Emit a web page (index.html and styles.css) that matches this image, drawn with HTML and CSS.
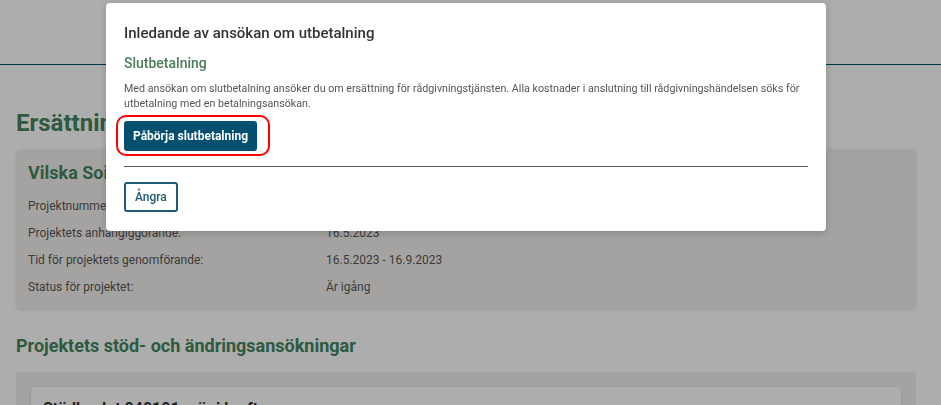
FILE: index.html
```html
<!DOCTYPE html>
<html lang="sv">
<head>
<meta charset="utf-8">
<title>Ersättningar</title>
<link rel="stylesheet" href="styles.css">
</head>
<body>
<header class="topbar"></header>
<main class="page">
  <h1 class="page-title">Ersättningar för rådgivning</h1>
  <section class="card">
    <h2 class="card-title">Vilska Soininen</h2>
    <div class="info-grid">
      <div class="info-label">Projektnummer:</div><div class="info-value">040101</div>
      <div class="info-label">Projektets anhängiggörande:</div><div class="info-value">16.5.2023</div>
      <div class="info-label">Tid för projektets genomförande:</div><div class="info-value">16.5.2023 - 16.9.2023</div>
      <div class="info-label">Status för projektet:</div><div class="info-value">Är igång</div>
    </div>
  </section>
  <h2 class="section-title">Projektets stöd- och ändringsansökningar</h2>
  <section class="card list-card">
    <div class="inner-card">
      <h3 class="inner-title">Stödbeslut 040101 – är i kraft</h3>
    </div>
  </section>
</main>
<div class="overlay"></div>
<div class="modal" role="dialog">
  <h2 class="modal-title">Inledande av ansökan om utbetalning</h2>
  <h3 class="modal-subtitle">Slutbetalning</h3>
  <p class="modal-text">Med ansökan om slutbetalning ansöker du om ersättning för rådgivningstjänsten. Alla kostnader i anslutning till rådgivningshändelsen söks för utbetalning med en betalningsansökan.</p>
  <div class="primary-wrap">
    <button class="btn-primary">Påbörja slutbetalning</button>
    <span class="highlight"></span>
  </div>
  <hr class="modal-divider">
  <button class="btn-secondary">Ångra</button>
</div>
</body>
</html>
```

FILE: styles.css
```css
* { box-sizing: border-box; }
html, body { margin: 0; padding: 0; }
body {
  font-family: Roboto, "Liberation Sans", sans-serif;
  background: #ffffff;
  color: #555555;
  width: 941px;
  height: 405px;
  overflow: hidden;
}
.topbar {
  height: 65px;
  border-bottom: 1px solid #004e6e;
}
.page {
  width: 900px;
  margin-left: 16px;
}
.page-title {
  margin: 42px 0 0;
  font-size: 24px;
  line-height: 32px;
  font-weight: 700;
  color: #44855f;
}
.card {
  background: #f3f1ee;
  border-radius: 5px;
  box-shadow: 0 1px 3px rgba(0,0,0,0.12);
  margin-top: 10px;
  padding: 12px 12px 8px;
}
.card-title {
  margin: 0;
  font-size: 18px;
  line-height: 24px;
  font-weight: 700;
  color: #44855f;
}
.info-grid {
  display: grid;
  grid-template-columns: 298px 1fr;
  margin-top: 8px;
  font-size: 12px;
  line-height: 27px;
  color: #585858;
}
.section-title {
  margin: 23px 0 0;
  font-size: 18px;
  line-height: 28px;
  font-weight: 700;
  color: #44855f;
}
.list-card {
  margin-top: 12px;
  padding: 15px;
  border-radius: 0;
  box-shadow: none;
}
.inner-card {
  background: #ffffff;
  border-radius: 4px;
  box-shadow: 0 1px 3px rgba(0,0,0,0.15);
  padding: 12px 12px;
  height: 60px;
}
.inner-title {
  margin: 0;
  font-size: 16px;
  font-weight: 700;
  color: #333333;
}
.overlay {
  position: fixed;
  inset: 0;
  background: rgba(0,0,0,0.32);
}
.modal {
  position: fixed;
  left: 106px;
  top: 3px;
  width: 720px;
  height: 228px;
  background: #ffffff;
  border-radius: 4px;
  padding: 20px 18px 18px;
  box-shadow: 0 2px 10px rgba(0,0,0,0.2);
}
.modal-title {
  margin: 0;
  font-size: 15px;
  line-height: 20px;
  font-weight: 500;
  color: #333333;
}
.modal-subtitle {
  margin: 11px 0 0;
  font-size: 14px;
  line-height: 18px;
  font-weight: 500;
  color: #4a7c59;
}
.modal-text {
  margin: 9px 0 0;
  font-size: 10.7px;
  line-height: 15px;
  color: #555555;
}
.primary-wrap {
  position: relative;
  display: inline-block;
  margin-top: 10px;
}
.btn-primary {
  display: block;
  height: 30px;
  padding: 0 9px;
  border: none;
  border-radius: 3px;
  background: #05506f;
  color: #ffffff;
  font-family: Roboto, "Liberation Sans", sans-serif;
  font-size: 12px;
  font-weight: 700;
}
.highlight {
  position: absolute;
  left: -8px;
  right: -13px;
  top: -6px;
  bottom: -5px;
  border: 2px solid #ff0000;
  border-radius: 10px;
}
.modal-divider {
  margin: 15px 0 0;
  border: none;
  border-top: 1px solid #555555;
}
.btn-secondary {
  display: block;
  margin-top: 15px;
  height: 30px;
  padding: 0 9px;
  background: #ffffff;
  border: 2px solid #1d5a78;
  border-radius: 3px;
  color: #1d5a78;
  font-family: Roboto, "Liberation Sans", sans-serif;
  font-size: 12px;
  font-weight: 500;
}
```
